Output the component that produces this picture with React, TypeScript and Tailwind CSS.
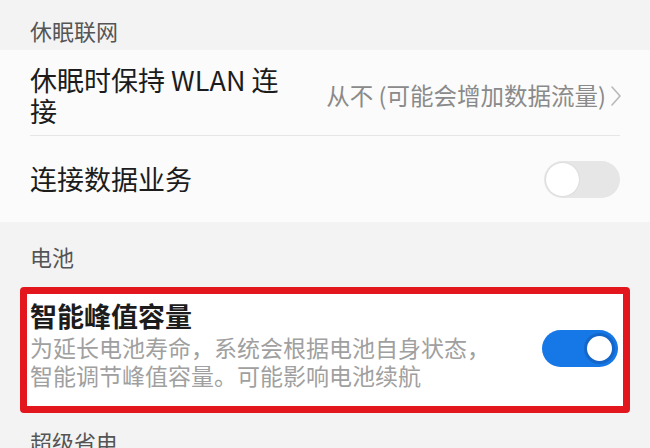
import React from 'react'

const font = { fontFamily: '"Noto Sans CJK SC", "Noto Sans", sans-serif' }

function Toggle({ on }: { on: boolean }) {
  return on ? (
    <div className="flex h-[37px] w-[76px] items-center justify-end rounded-full bg-[#1677e6] px-[3px]">
      <div className="h-[31px] w-[31px] rounded-full border-[3px] border-[#1466c8] bg-white" />
    </div>
  ) : (
    <div className="flex h-[37px] w-[76px] items-center rounded-full bg-[#e6e6e6] px-[2px]">
      <div className="h-[33px] w-[33px] rounded-full bg-white shadow-[0_0_2px_rgba(0,0,0,0.12)]" />
    </div>
  )
}

function Chevron() {
  return (
    <svg width="12" height="22" viewBox="0 0 12 22" fill="none" className="ml-[4px]">
      <path d="M2 2 L10 11 L2 20" stroke="#b8b8b8" strokeWidth="1.6" strokeLinecap="round" strokeLinejoin="round" />
    </svg>
  )
}

export default function App() {
  return (
    <div className="h-[448px] w-[650px] overflow-hidden bg-[#f3f3f3]" style={font}>
      {/* 休眠联网 */}
      <div className="h-[50px] pl-[30px] pt-[15px] text-[22px] leading-[30px] text-[#555]">休眠联网</div>

      <div className="bg-[#fbfbfb]">
        <div className="flex items-center pl-[30px] pr-[28px] pt-[14px] pb-[9px]">
          <div className="max-w-[258px] text-[27px] leading-[31px] text-[#1c1c1c]">休眠时保持 WLAN 连接</div>
          <div className="ml-auto flex items-center pt-[2px] text-[23.5px] text-[#8a8a8a]">
            从不 (可能会增加数据流量)
            <Chevron />
          </div>
        </div>
        <div className="mx-[30px] h-px bg-[#e6e6e6]" />
        <div className="flex h-[86px] items-center pl-[30px] pr-[30px]">
          <div className="text-[27px] text-[#1c1c1c]">连接数据业务</div>
          <div className="ml-auto">
            <Toggle on={false} />
          </div>
        </div>
      </div>

      {/* 电池 */}
      <div className="h-[65px] pl-[30px] pt-[19px] text-[22px] leading-[30px] text-[#555]">电池</div>

      <div className="mx-[20px] flex rounded-[4px] border-[7px] border-[#e3161e] bg-white pl-[3px] pr-[5px] pt-[5px] pb-[17px]">
        <div>
          <div className="text-[27px] font-semibold leading-[34px] text-[#1c1c1c]">智能峰值容量</div>
          <div className="text-[23px] leading-[28px] text-[#a0a0a0]">
            <div>为延长电池寿命，系统会根据电池自身状态，</div>
            <div>智能调节峰值容量。可能影响电池续航</div>
          </div>
        </div>
        <div className="ml-auto mt-[31px]">
          <Toggle on={true} />
        </div>
      </div>

      <div className="pl-[30px] pt-[13px] text-[22px] leading-[30px] text-[#555]">超级省电</div>
    </div>
  )
}
